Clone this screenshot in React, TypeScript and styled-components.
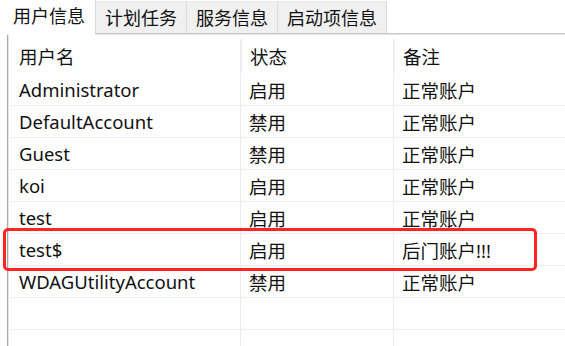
import React from 'react'
import styled, { createGlobalStyle } from 'styled-components'

const GlobalStyle = createGlobalStyle`
  html, body {
    margin: 0;
    padding: 0;
    background: #ffffff;
    overflow: hidden;
  }
  body {
    font-family: "Noto Sans", "Noto Sans CJK SC", sans-serif;
    color: #111;
  }
`

const Window = styled.div`
  width: 565px;
  height: 346px;
  background: #fff;
  display: flex;
  flex-direction: column;
  overflow: hidden;
`

const TabStrip = styled.div`
  display: flex;
  align-items: flex-end;
  height: 33px;
  flex-shrink: 0;
`

const Tab = styled.div<{ $active?: boolean }>`
  height: ${p => (p.$active ? '35px' : '32px')};
  margin-bottom: ${p => (p.$active ? '-2px' : '0')};
  padding: ${p => (p.$active ? '0 10px 0 13px' : '0 9px')};
  padding-bottom: ${p => (p.$active ? '4px' : '0')};
  display: flex;
  align-items: center;
  box-sizing: border-box;
  font-size: 18px;
  line-height: 1;
  background: ${p => (p.$active ? '#ffffff' : '#f0f0f0')};
  border-right: 1px solid #d9d9d9;
  border-top: ${p => (p.$active ? 'none' : '1px solid #e6e6e6')};
  position: relative;
  z-index: ${p => (p.$active ? 2 : 1)};
  white-space: nowrap;
`

const Panel = styled.div`
  flex: 1;
  margin-left: 7px;
  border-top: 1px solid #c8c8c8;
  border-left: 1px solid #a8a8a8;
  box-shadow: inset 1px 1px 0 #e4e4e4;
  padding-top: 2px;
  position: relative;
`

const Grid = styled.div`
  display: grid;
  grid-template-columns: 232px 153px 1fr;
`

const HeadCell = styled.div<{ $first?: boolean }>`
  height: 34px;
  margin: 3px 0 1px;
  display: flex;
  align-items: center;
  padding-left: ${p => (p.$first ? '11px' : '8px')};
  font-size: 18.5px;
  color: #111;
  border-left: ${p => (p.$first ? 'none' : '2px solid #ededed')};
  box-sizing: border-box;
`

const Cell = styled.div<{ $first?: boolean }>`
  height: 32px;
  display: flex;
  align-items: center;
  padding-left: ${p => (p.$first ? '11px' : '8px')};
  font-size: 18.5px;
  color: #111;
  border-left: ${p => (p.$first ? 'none' : '1px solid #ececec')};
  border-bottom: 1px solid #eeeeee;
  box-sizing: border-box;
  white-space: nowrap;
`

const RowWrap = styled.div`
  display: contents;
`

const Highlight = styled.div`
  position: absolute;
  left: -5px;
  top: 194px;
  width: 534px;
  height: 43px;
  border: 3px solid #ff2424;
  border-radius: 5px;
  box-sizing: border-box;
  pointer-events: none;
`

const tabs = ['用户信息', '计划任务', '服务信息', '启动项信息']

const users = [
  { name: 'Administrator', status: '启用', note: '正常账户' },
  { name: 'DefaultAccount', status: '禁用', note: '正常账户' },
  { name: 'Guest', status: '禁用', note: '正常账户' },
  { name: 'koi', status: '启用', note: '正常账户' },
  { name: 'test', status: '启用', note: '正常账户' },
  { name: 'test$', status: '启用', note: '后门账户!!!' },
  { name: 'WDAGUtilityAccount', status: '禁用', note: '正常账户' },
  { name: '', status: '', note: '' },
  { name: '', status: '', note: '' },
]

export default function App() {
  return (
    <Window>
      <GlobalStyle />
      <TabStrip>
        {tabs.map((t, i) => (
          <Tab key={t} $active={i === 0}>{t}</Tab>
        ))}
      </TabStrip>
      <Panel>
        <Grid>
          <HeadCell $first>用户名</HeadCell>
          <HeadCell>状态</HeadCell>
          <HeadCell>备注</HeadCell>
          {users.map((u, i) => (
            <RowWrap key={i}>
              <Cell $first>{u.name}</Cell>
              <Cell>{u.status}</Cell>
              <Cell>{u.note}</Cell>
            </RowWrap>
          ))}
        </Grid>
        <Highlight />
      </Panel>
    </Window>
  )
}
